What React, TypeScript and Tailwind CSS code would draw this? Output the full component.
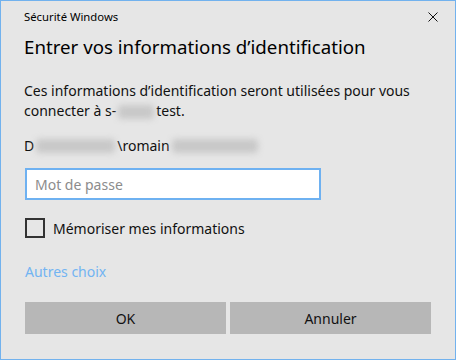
import { useState } from "react";

function Blur({ w }: { w: number }) {
  return (
    <span className="inline-block relative align-middle h-[16px]" style={{ width: w }}>
      <span className="absolute inset-x-[2px] inset-y-[1px] bg-[#c8c8c8] blur-[3px] rounded-sm" />
    </span>
  );
}

export default function App() {
  const [remember, setRemember] = useState(false);

  return (
    <div
      className="w-[456px] h-[360px] bg-[#e6e6e6] border border-[#72b2ee] flex flex-col text-black"
      style={{ fontFamily: '"Noto Sans", "Open Sans", sans-serif' }}
    >
      {/* Title bar */}
      <div className="h-[32px] flex items-center justify-between pl-[23px] pr-[17px]">
        <span className="text-[11.3px] leading-none">Sécurité Windows</span>
        <button className="w-[10px] h-[10px] flex items-center justify-center">
          <svg width="10" height="10" viewBox="0 0 10 10">
            <path d="M0.5 0.5 L9.5 9.5 M9.5 0.5 L0.5 9.5" stroke="#111" strokeWidth="1" />
          </svg>
        </button>
      </div>

      <div className="flex flex-col px-[24px]">
        <h1 className="text-[18.7px] leading-[28px] -ml-px whitespace-nowrap">
          Entrer vos informations d’identification
        </h1>

        <p className="mt-[20px] text-[14px] leading-[20px] -ml-px text-[#111] whitespace-nowrap">
          Ces informations d’identification seront utilisées pour vous
          <br />
          connecter à s-
          <Blur w={40} />
          test.
        </p>

        <div className="mt-[15px] h-[20px] text-[14px] leading-[20px] -ml-px flex items-center text-[#111]">
          <span>D</span>
          <Blur w={83} />
          <span>\romain</span>
          <Blur w={90} />
        </div>

        <input
          type="password"
          placeholder="Mot de passe"
          className="mt-[12px] w-[296px] h-[32px] bg-white border-2 border-[#6eb1f1] px-[8px] text-[14px] outline-none placeholder:text-[#8c8c8c]"
        />

        <label className="mt-[18px] h-[20px] flex items-center gap-[8px] text-[14px] cursor-pointer">
          <span className="w-[20px] h-[20px] border-2 border-[#333333] bg-transparent flex items-center justify-center">
            {remember && (
              <svg width="12" height="12" viewBox="0 0 12 12">
                <path d="M1 6 L4.5 9.5 L11 2" stroke="#000" strokeWidth="1.5" fill="none" />
              </svg>
            )}
          </span>
          <input
            type="checkbox"
            className="hidden"
            checked={remember}
            onChange={(e) => setRemember(e.target.checked)}
          />
          <span className="text-[#111]">Mémoriser mes informations</span>
        </label>

        <a href="#" className="mt-[24px] text-[14px] leading-[20px] text-[#72b4f2] self-start">
          Autres choix
        </a>

        <div className="mt-[20px] flex gap-[4px]">
          <button className="w-[201px] h-[32px] bg-[#b7b7b7] text-[14px] text-[#111]">OK</button>
          <button className="w-[201px] h-[32px] bg-[#b7b7b7] text-[14px] text-[#111]">Annuler</button>
        </div>
      </div>
    </div>
  );
}
